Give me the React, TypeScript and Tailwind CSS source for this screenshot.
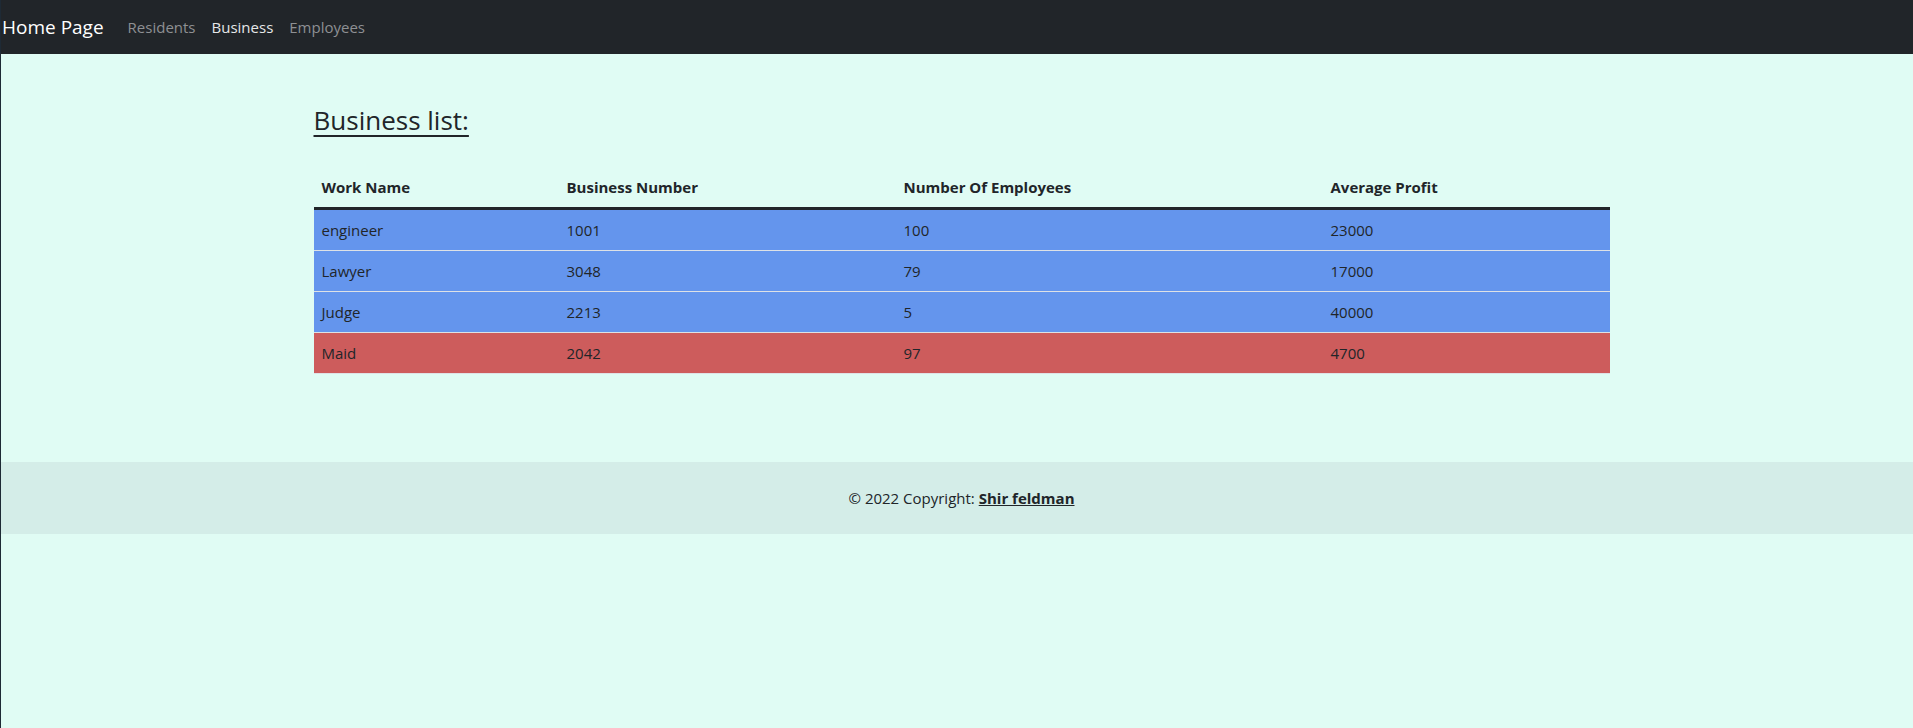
export default function App() {
  const rows = [
    { name: "engineer", number: 1001, employees: 100, profit: 23000 },
    { name: "Lawyer", number: 3048, employees: 79, profit: 17000 },
    { name: "Judge", number: 2213, employees: 5, profit: 40000 },
    { name: "Maid", number: 2042, employees: 97, profit: 4700 },
  ];

  return (
    <div
      className="min-h-screen bg-[#e0fcf4] text-[#212529] border-l border-[#1e2a35]"
      style={{ fontFamily: '"Open Sans", "Noto Sans", sans-serif' }}
    >
      <nav className="h-[54px] bg-[#212529] flex items-center">
        <a className="text-white text-[19px] ml-px mr-4 leading-[30px]">Home Page</a>
        <a className="px-2 text-[15px] text-[#8e9093]">Residents</a>
        <a className="px-2 text-[15px] text-[#e6e7e8]">Business</a>
        <a className="px-2 text-[15px] text-[#8e9093]">Employees</a>
      </nav>

      <div className="flex justify-center pl-[9px]">
        <div className="w-[1296px] pt-[49px]">
          <h3 className="text-[26px] leading-[34px] underline underline-offset-[5px] decoration-2 font-medium">
            Business list:
          </h3>

          <table className="w-full mt-[30px] text-left text-[15px] leading-6 border-collapse">
            <thead>
              <tr className="border-b-[3px] border-[#212529]">
                <th className="w-[245px] px-2 py-2 font-bold">Work Name</th>
                <th className="w-[337px] px-2 py-2 font-bold">Business Number</th>
                <th className="w-[427px] px-2 py-2 font-bold">Number Of Employees</th>
                <th className="px-2 py-2 font-bold">Average Profit</th>
              </tr>
            </thead>
            <tbody>
              {rows.map((r) => (
                <tr
                  key={r.name}
                  className={
                    r.employees > 95 && r.profit < 10000
                      ? "bg-[#cd5c5c] border-b border-[#dee2e6]"
                      : "bg-[#6495ed] border-b border-[#dee2e6]"
                  }
                >
                  <td className="px-2 py-2">{r.name}</td>
                  <td className="px-2 py-2">{r.number}</td>
                  <td className="px-2 py-2">{r.employees}</td>
                  <td className="px-2 py-2">{r.profit}</td>
                </tr>
              ))}
            </tbody>
          </table>
        </div>
      </div>

      <footer className="mt-[88px] bg-[#d4ede8] py-6 pl-[9px] text-center text-[15px] leading-6">
        © 2022 Copyright:{" "}
        <a className="font-bold underline">Shir feldman</a>
      </footer>
    </div>
  );
}
